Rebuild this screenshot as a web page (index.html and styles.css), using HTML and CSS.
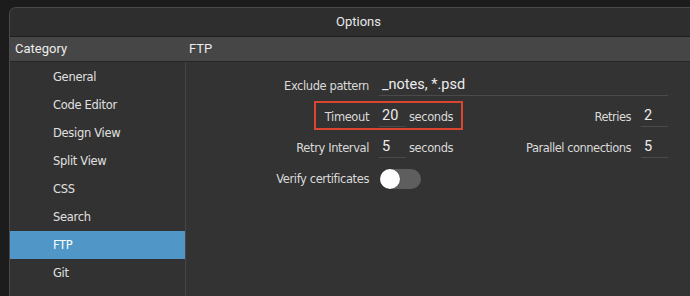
FILE: index.html
```html
<!DOCTYPE html>
<html lang="en">
<head>
    <meta charset="UTF-8">
    <title>Options</title>
    <link rel="stylesheet" href="styles.css">
</head>
<body>
    <div class="window">
        <div class="titlebar">Options</div>
        <div class="header">
            <div class="header-category">Category</div>
            <div class="header-page">FTP</div>
        </div>
        <div class="main">
            <ul class="sidebar">
                <li>General</li>
                <li>Code Editor</li>
                <li>Design View</li>
                <li>Split View</li>
                <li>CSS</li>
                <li>Search</li>
                <li class="active">FTP</li>
                <li>Git</li>
            </ul>
            <div class="content">
                <div class="row">
                    <span class="label">Exclude pattern</span>
                    <span class="field wide">_notes, *.psd</span>
                </div>
                <div class="row">
                    <div class="highlight"></div>
                    <span class="label">Timeout</span>
                    <span class="field">20</span>
                    <span class="unit">seconds</span>
                    <span class="spacer"></span>
                    <span class="label-right">Retries</span>
                    <span class="field">2</span>
                </div>
                <div class="row">
                    <span class="label">Retry Interval</span>
                    <span class="field">5</span>
                    <span class="unit">seconds</span>
                    <span class="spacer"></span>
                    <span class="label-right">Parallel connections</span>
                    <span class="field">5</span>
                </div>
                <div class="row">
                    <span class="label">Verify certificates</span>
                    <span class="toggle"><span class="knob"></span></span>
                </div>
            </div>
        </div>
    </div>
</body>
</html>
```

FILE: styles.css
```css
html, body {
    margin: 0;
    height: 296px;
    overflow: hidden;
}

body {
    background-color: #1c1c1c;
    font-family: 'DejaVu Sans', Verdana, sans-serif;
    color: #e0e0e0;
}

.window {
    margin: 7px 0 0 9px;
    height: 300px;
    border-top: 1px solid #4a4a4a;
    border-left: 1px solid #4a4a4a;
    border-top-left-radius: 7px;
    background-color: #333333;
    overflow: hidden;
}

.titlebar {
    height: 28px;
    line-height: 28px;
    text-align: center;
    background-color: #2e2e2e;
    font-family: Roboto, 'Liberation Sans', sans-serif;
    font-size: 13px;
    color: #e8e8e8;
    border-bottom: 1px solid #1f1f1f;
    padding-left: 17px;
}

.header {
    display: flex;
    height: 24px;
    line-height: 24px;
    background-color: #464646;
    border-bottom: 1px solid #262626;
    font-family: Roboto, 'Liberation Sans', sans-serif;
    font-size: 13px;
    color: #ececec;
}

.header-category {
    width: 171px;
    padding-left: 5px;
}

.header-page {
    padding-left: 3px;
}

.main {
    display: flex;
}

.sidebar {
    list-style: none;
    margin: 0;
    padding: 1px 0 0 0;
    width: 175px;
    height: 240px;
    border-right: 1px solid #454545;
    background-color: #323232;
}

.sidebar li {
    height: 28px;
    line-height: 28px;
    padding-left: 43px;
    font-size: 11.5px;
    letter-spacing: -0.3px;
}

.sidebar li.active {
    background-color: #5097c8;
    color: #ffffff;
}

.content {
    flex: 1;
    padding: 8px 22px 0 0;
}

.row {
    position: relative;
    display: flex;
    align-items: center;
    height: 31px;
}

.label {
    width: 183px;
    margin-right: 10px;
    text-align: right;
    font-size: 11.5px;
    letter-spacing: -0.4px;
    color: #dadada;
}

.label-right {
    margin-right: 10px;
    font-size: 11.5px;
    letter-spacing: -0.5px;
    color: #dadada;
}

.field {
    box-sizing: border-box;
    width: 27px;
    height: 21px;
    line-height: 20px;
    padding-left: 3px;
    border-bottom: 1px solid #4a4a4a;
    font-family: Roboto, 'Liberation Sans', sans-serif;
    font-size: 14.5px;
    color: #ececec;
}

.field.wide {
    flex: 1;
    width: auto;
}

.unit {
    margin-left: 3px;
    font-size: 11.5px;
    letter-spacing: -0.4px;
    color: #dadada;
}

.spacer {
    flex: 1;
}

.highlight {
    position: absolute;
    left: 128px;
    top: 0;
    width: 145px;
    height: 25px;
    border: 2px solid #dc4530;
}

.toggle {
    position: relative;
    width: 41px;
    height: 20px;
    margin-left: 1px;
    border-radius: 10px;
    background-color: #5e5e5e;
}

.knob {
    position: absolute;
    left: 0;
    top: 0;
    width: 20px;
    height: 20px;
    border-radius: 50%;
    background-color: #ffffff;
    box-shadow: 0 0 1px rgba(0, 0, 0, 0.6);
}
```
